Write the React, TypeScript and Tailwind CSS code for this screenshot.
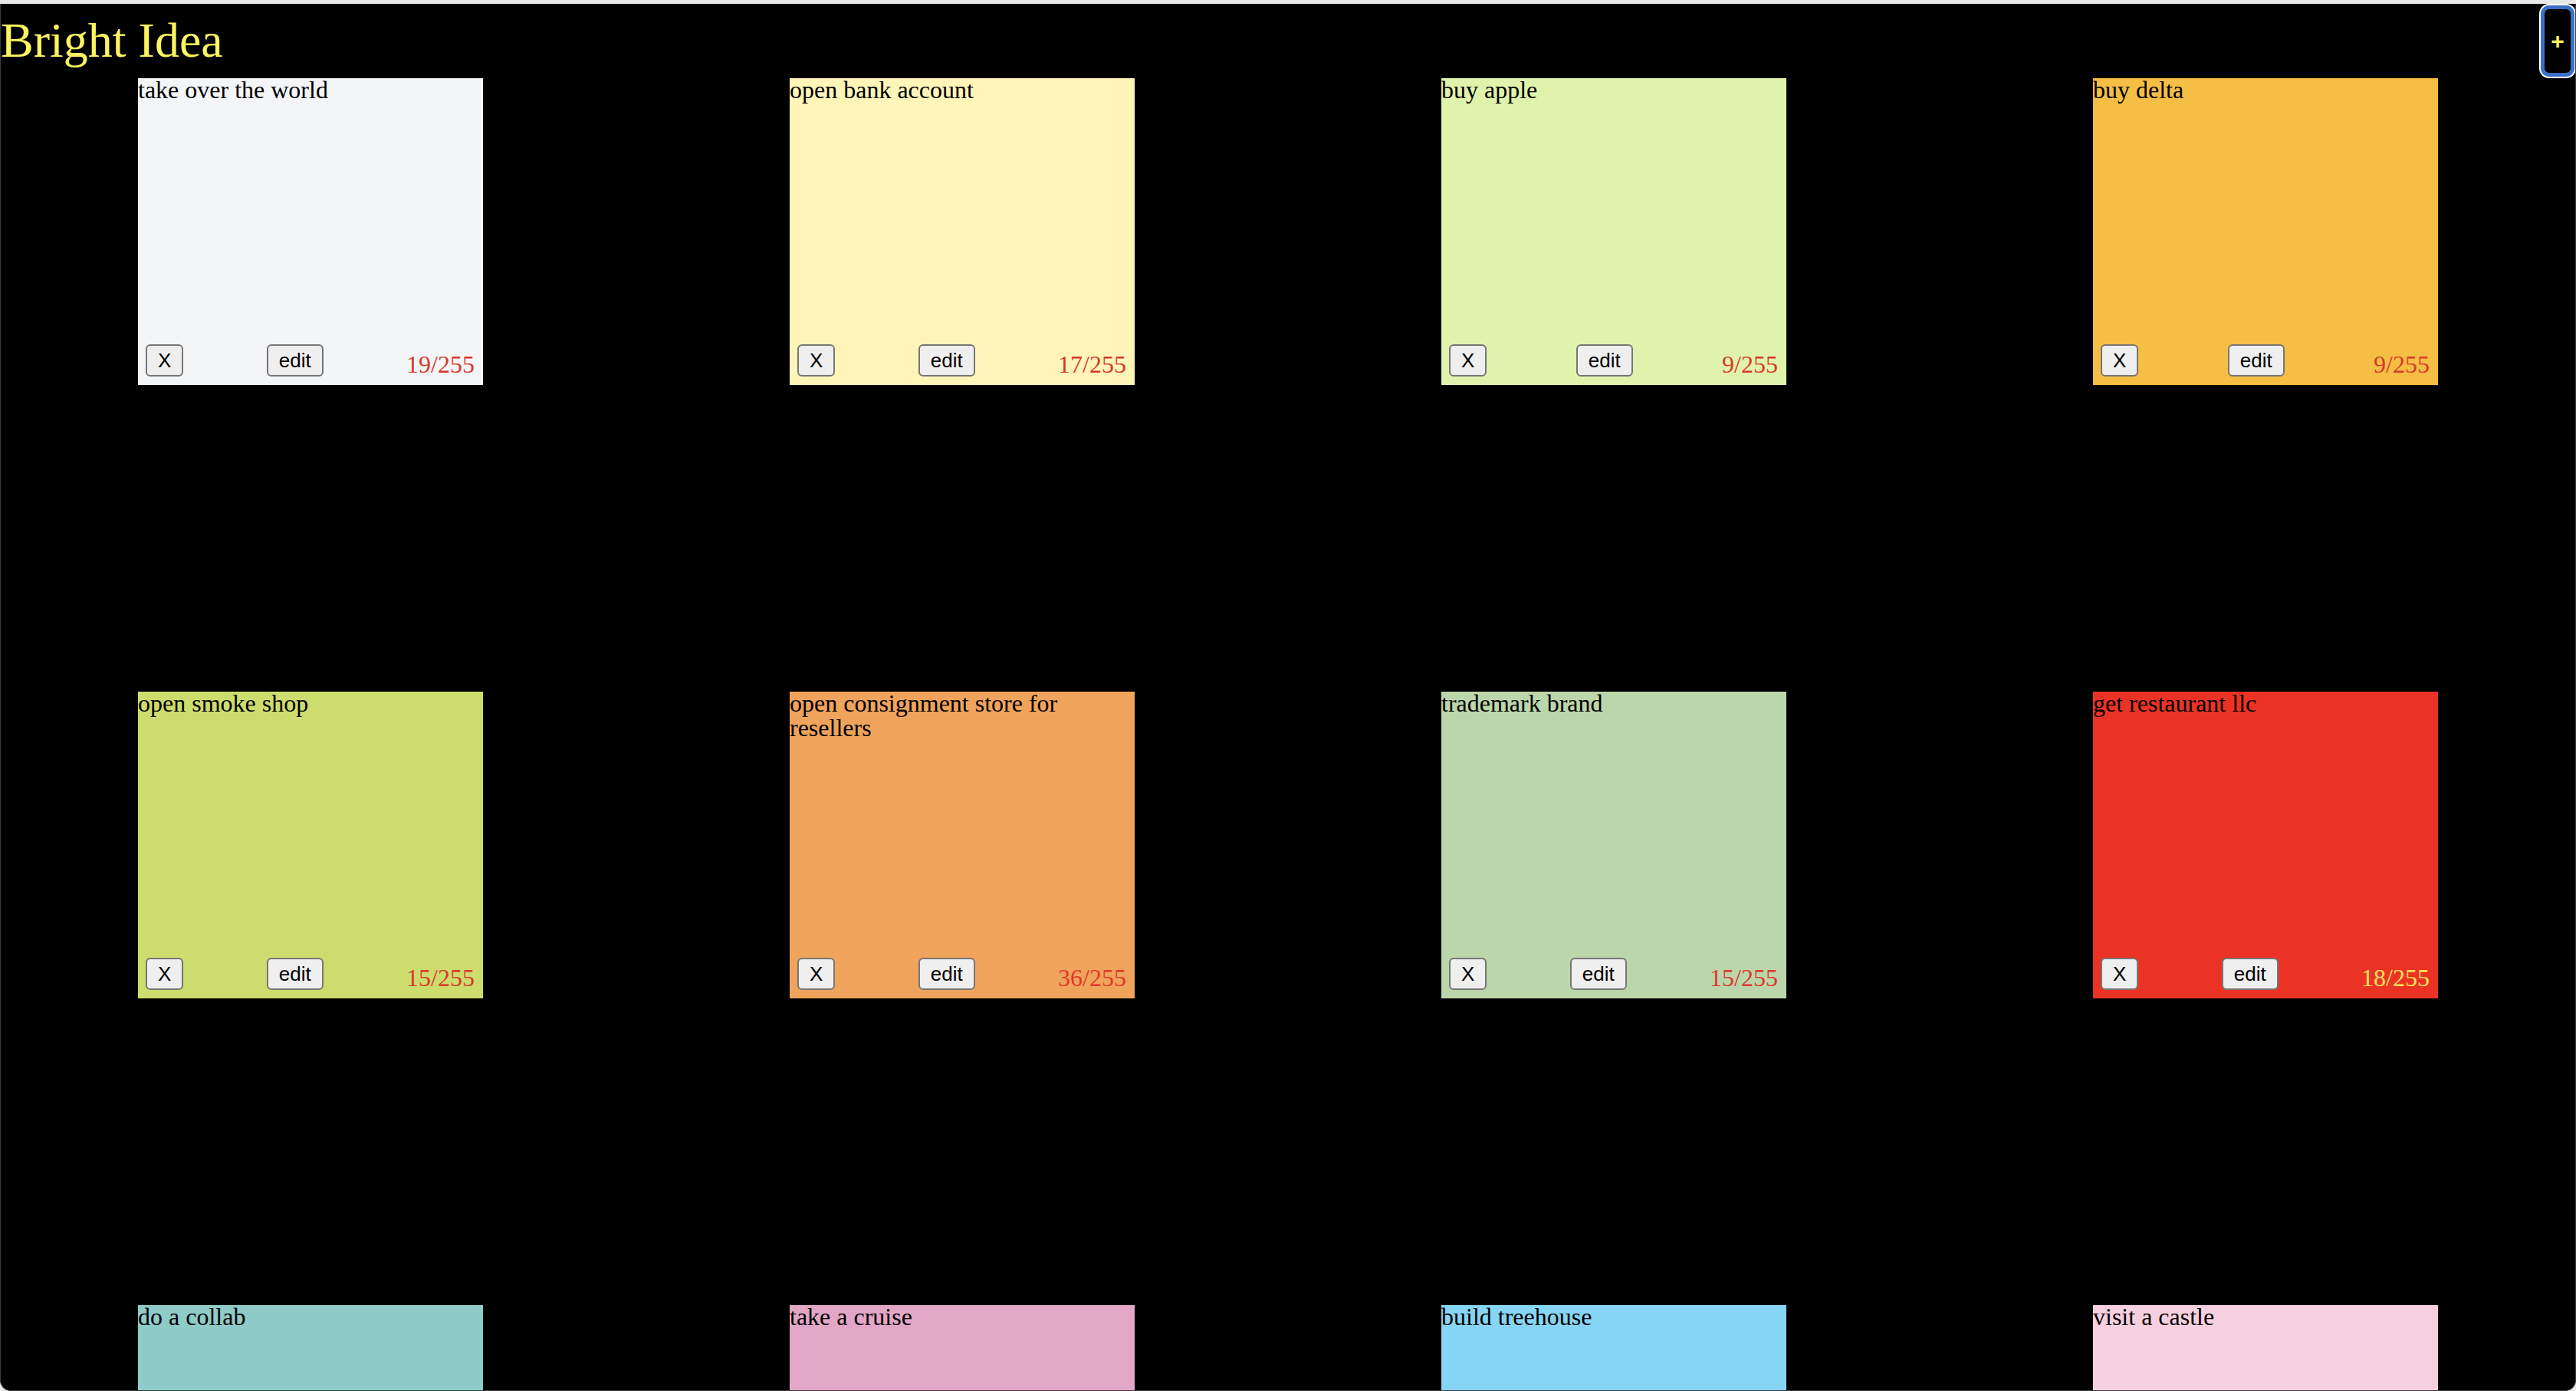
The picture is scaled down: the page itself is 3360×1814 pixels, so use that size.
const notes = [
  { text: 'take over the world', bg: 'bg-[#f4f5f7]', count: 'text-[#d8392b]' },
  { text: 'open bank account', bg: 'bg-[#fff5b9]', count: 'text-[#d8392b]' },
  { text: 'buy apple', bg: 'bg-[#e0f3ad]', count: 'text-[#d8392b]' },
  { text: 'buy delta', bg: 'bg-[#f5be44]', count: 'text-[#d8392b]' },
  { text: 'open smoke shop', bg: 'bg-[#cddd6d]', count: 'text-[#d8392b]' },
  { text: 'open consignment store for resellers', bg: 'bg-[#f0a35b]', count: 'text-[#e0392a]' },
  { text: 'trademark brand', bg: 'bg-[#bcd6ab]', count: 'text-[#d8392b]' },
  { text: 'get restaurant llc', bg: 'bg-[#eb3325]', count: 'text-[#fde35e]' },
  { text: 'do a collab', bg: 'bg-[#8ecbc9]', count: 'text-[#d8392b]' },
  { text: 'take a cruise', bg: 'bg-[#e2a6c6]', count: 'text-[#d8392b]' },
  { text: 'build treehouse', bg: 'bg-[#86d5f4]', count: 'text-[#d8392b]' },
  { text: 'visit a castle', bg: 'bg-[#f7d0e0]', count: 'text-[#d8392b]' },
];

type Note = (typeof notes)[number];

function NoteCard({ note }: { note: Note }) {
  return (
    <div className={`flex h-[400px] w-[450px] flex-col justify-between ${note.bg}`}>
      <p className="-mt-[1px] text-[32px] leading-[32px] text-black">{note.text}</p>
      <div className="flex items-end justify-between px-[10px] pb-[11px]">
        <button className="h-[42px] rounded-[6px] border-2 border-[#767676] bg-[#efefef] px-[14px] font-['Liberation_Sans',Arial,sans-serif] text-[26px] leading-none text-black">
          X
        </button>
        <button className="h-[42px] rounded-[6px] border-2 border-[#767676] bg-[#efefef] px-[14px] font-['Liberation_Sans',Arial,sans-serif] text-[26px] leading-none text-black">
          edit
        </button>
        <span className={`mr-[1px] text-[32px] leading-[32px] ${note.count}`}>{note.text.length}/255</span>
      </div>
    </div>
  );
}

export default function App() {
  return (
    <div className="h-screen overflow-hidden bg-[#e9e9e9] font-['Liberation_Serif','Times_New_Roman',serif]">
      <div className="mt-[5px] h-[1809px] overflow-hidden rounded-b-[14px] border-x border-b border-[#3a3a3a] bg-black">
        <header className="flex h-[97px] items-start justify-between">
          <h1 className="pt-[12px] text-[64px] leading-[72px] text-[#fdf45f]">Bright Idea</h1>
          <button className="mr-[1px] mt-[2px] flex h-[93px] w-[44px] items-center justify-center rounded-[11px] border-[5px] border-[#3b6fc6] bg-black font-['Liberation_Sans',Arial,sans-serif] text-[30px] font-bold leading-none text-[#fdf45f] ring-2 ring-white">
            +
          </button>
        </header>
        <main className="grid grid-cols-[repeat(4,450px)] gap-x-[400px] gap-y-[400px] pl-[179px]">
          {notes.map((note) => (
            <NoteCard key={note.text} note={note} />
          ))}
        </main>
      </div>
    </div>
  );
}
